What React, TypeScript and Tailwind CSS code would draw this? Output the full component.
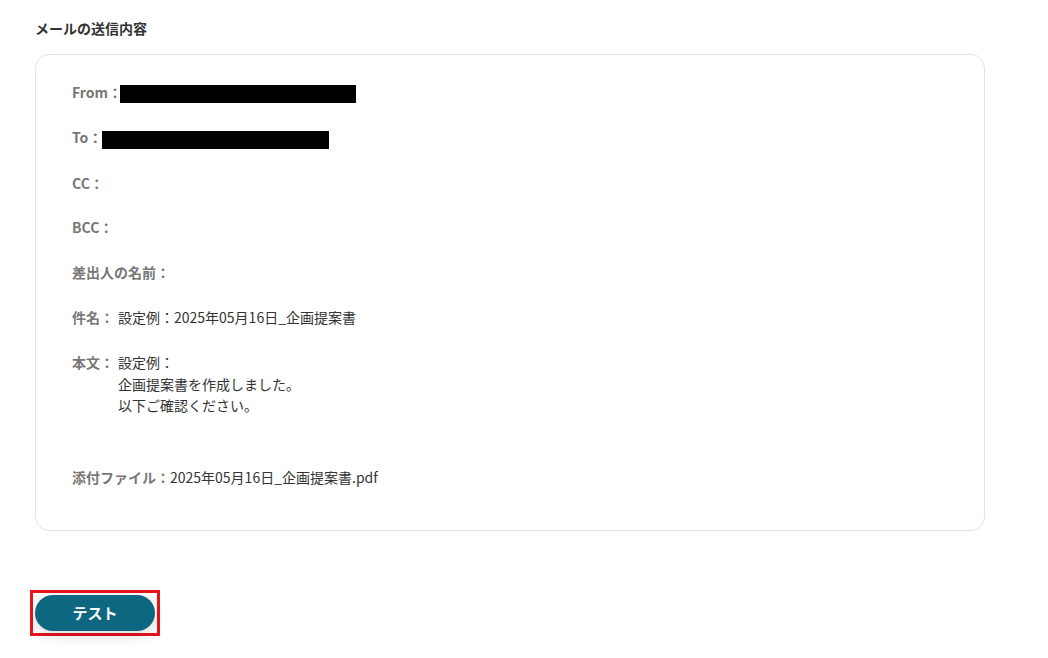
const font = {
  fontFamily: '"Noto Sans CJK JP", "Noto Sans", sans-serif',
};

type Row = {
  label: string;
  value?: React.ReactNode;
  valueClass?: string;
  className?: string;
};

const Redacted = ({ width }: { width: number }) => (
  <span
    className="inline-block h-[18px] bg-black align-middle"
    style={{ width }}
  />
);

const rows: Row[] = [
  { label: "From：", value: <Redacted width={236} />, valueClass: "-ml-[2px]" },
  { label: "To：", value: <Redacted width={227} />, valueClass: "ml-0" },
  { label: "CC：" },
  { label: "BCC：" },
  { label: "差出人の名前：" },
  { label: "件名：", value: "設定例：2025年05月16日_企画提案書" },
  {
    label: "本文：",
    value: (
      <>
        設定例：
        <br />
        企画提案書を作成しました。
        <br />
        以下ご確認ください。
      </>
    ),
    className: "mb-[26px]",
  },
  {
    label: "添付ファイル：",
    value: "2025年05月16日_企画提案書.pdf",
    valueClass: "ml-0",
  },
];

const App: React.FC = () => {
  return (
    <div className="min-h-screen bg-white px-[35px] pt-[18px]" style={font}>
      {/* 見出し */}
      <h2 className="text-[14px] font-bold leading-[21px] text-[#333]">
        メールの送信内容
      </h2>

      {/* メール内容カード */}
      <div className="mt-[15px] w-[950px] rounded-[14px] border border-[#e3e3e3] pl-[36px] pr-6 pt-[27px] pb-[42px]">
        <ul className="flex flex-col gap-y-[23.8px]">
          {rows.map(({ label, value, valueClass, className }) => (
            <li
              key={label}
              className={`flex items-start text-[14px] leading-[21px] ${className ?? ""}`}
            >
              <span className="shrink-0 font-bold text-[#777]">{label}</span>
              {value && (
                <span
                  className={`text-[#333] leading-[21.5px] ${valueClass ?? "ml-[4px]"}`}
                >
                  {value}
                </span>
              )}
            </li>
          ))}
        </ul>
      </div>

      {/* テストボタン */}
      <div className="mt-[59px] -ml-[5px] inline-block border-[3px] border-[#e8141b] p-[2px]">
        <button
          type="button"
          className="block h-[36px] w-[120px] rounded-full bg-[#0e6780] text-[15px] font-bold text-white shadow-[0_4px_14px_rgba(0,0,0,0.15)]"
        >
          テスト
        </button>
      </div>
    </div>
  );
};

export default App;
